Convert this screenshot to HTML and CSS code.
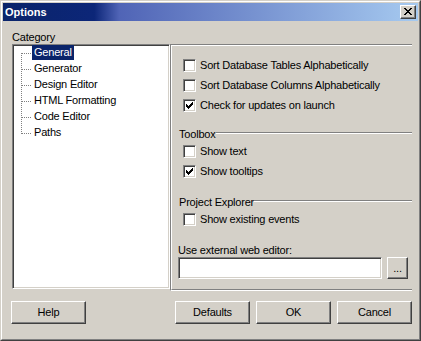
FILE: index.html
```html
<!DOCTYPE html>
<html>
<head>
<meta charset="utf-8">
<title>Options</title>
<link rel="stylesheet" href="styles.css">
</head>
<body>
<div class="window">
  <div class="frame">
    <div class="titlebar">
      <span class="title">Options</span>
      <div class="closebtn raised">
        <svg width="8" height="7" viewBox="0 0 8 7" shape-rendering="crispEdges"><path fill="#000" d="M0 0h2v1h-2zM6 0h2v1h-2zM1 1h2v1h-2zM5 1h2v1h-2zM2 2h4v1h-4zM3 3h2v1h-2zM2 4h4v1h-4zM1 5h2v1h-2zM5 5h2v1h-2zM0 6h2v1h-2zM6 6h2v1h-2z"/></svg>
      </div>
    </div>
    <div class="client">
      <div class="main">
        <div class="leftcol">
          <div class="label">Category</div>
          <div class="tree sunken">
            <ul class="items">
              <li class="item first"><span class="branch"></span><span class="text selected">General</span></li>
              <li class="item"><span class="branch"></span><span class="text">Generator</span></li>
              <li class="item"><span class="branch"></span><span class="text">Design Editor</span></li>
              <li class="item"><span class="branch"></span><span class="text">HTML Formatting</span></li>
              <li class="item"><span class="branch"></span><span class="text">Code Editor</span></li>
              <li class="item last"><span class="branch"></span><span class="text">Paths</span></li>
            </ul>
          </div>
        </div>
        <div class="panel">
          <div class="panel-inner">
            <div class="check"><span class="cb sunken"></span><span class="cb-text">Sort Database Tables Alphabetically</span></div>
            <div class="check"><span class="cb sunken"></span><span class="cb-text">Sort Database Columns Alphabetically</span></div>
            <div class="check"><span class="cb sunken"><svg width="7" height="7" viewBox="0 0 7 7" shape-rendering="crispEdges"><path fill="#000" d="M6 0h1v3h-1zM5 1h1v3h-1zM4 2h1v3h-1zM3 3h1v3h-1zM2 4h1v3h-1zM1 3h1v3h-1zM0 2h1v3h-1z"/></svg></span><span class="cb-text">Check for updates on launch</span></div>

            <div class="group-header gh-toolbox"><span class="gh-text">Toolbox</span><span class="gh-line"></span></div>
            <div class="check"><span class="cb sunken"></span><span class="cb-text">Show text</span></div>
            <div class="check"><span class="cb sunken"><svg width="7" height="7" viewBox="0 0 7 7" shape-rendering="crispEdges"><path fill="#000" d="M6 0h1v3h-1zM5 1h1v3h-1zM4 2h1v3h-1zM3 3h1v3h-1zM2 4h1v3h-1zM1 3h1v3h-1zM0 2h1v3h-1z"/></svg></span><span class="cb-text">Show tooltips</span></div>

            <div class="group-header gh-project"><span class="gh-text">Project Explorer</span><span class="gh-line"></span></div>
            <div class="check"><span class="cb sunken"></span><span class="cb-text">Show existing events</span></div>

            <div class="editor-label">Use external web editor:</div>
            <div class="editor-row">
              <div class="field sunken"></div>
              <div class="btn raised browse">...</div>
            </div>
          </div>
        </div>
      </div>
      <div class="footer">
        <div class="btn raised help">Help</div>
        <div class="btn raised defaults">Defaults</div>
        <div class="btn raised">OK</div>
        <div class="btn raised">Cancel</div>
      </div>
    </div>
  </div>
</div>
</body>
</html>
```
FILE: styles.css
```css
html, body {
  margin: 0;
  padding: 0;
}
body {
  width: 421px;
  height: 341px;
  overflow: hidden;
  background: #d4d0c8;
  font-family: "Liberation Sans", Arial, sans-serif;
  font-size: 11px;
  letter-spacing: -0.2px;
  color: #000;
}
.window {
  width: 421px;
  height: 341px;
  box-sizing: border-box;
  border: 1px solid;
  border-color: #d4d0c8 #404040 #404040 #d4d0c8;
  background: #d4d0c8;
}
.frame {
  height: 100%;
  box-sizing: border-box;
  border: 1px solid;
  border-color: #fff #808080 #808080 #fff;
  padding: 1px;
  display: flex;
  flex-direction: column;
}
.raised {
  box-sizing: border-box;
  background: #d4d0c8;
  border: 1px solid;
  border-color: #fff #404040 #404040 #fff;
  box-shadow: inset -1px -1px #808080, inset 1px 1px #d4d0c8;
}
.sunken {
  box-sizing: border-box;
  background: #fff;
  border: 1px solid;
  border-color: #808080 #fff #fff #808080;
  box-shadow: inset 1px 1px #404040, inset -1px -1px #d4d0c8;
}
.titlebar {
  flex: none;
  height: 18px;
  display: flex;
  align-items: center;
  padding: 0 2px;
  background: linear-gradient(to right, #0a246a 0, #0c2678 22%, #5064b6 28%, #a6caf0 100%);
}
.title {
  flex: 1;
  color: #fff;
  font-weight: bold;
  line-height: 18px;
  letter-spacing: 0;
}
.closebtn {
  width: 16px;
  height: 14px;
  padding: 2px 0 0 3px;
}
.closebtn svg {
  display: block;
}
.client {
  flex: 1;
  display: flex;
  flex-direction: column;
  padding: 10px 6px 0 9px;
}
.main {
  display: flex;
}
.leftcol {
  width: 158px;
  flex: none;
}
.label {
  line-height: 13px;
  height: 13px;
}
.tree {
  height: 245px;
}
.items {
  list-style: none;
  margin: 0;
  padding: 0;
}
.item {
  display: flex;
  align-items: flex-start;
  height: 16px;
}
.branch {
  flex: none;
  width: 19px;
  height: 16px;
  background-image:
    repeating-linear-gradient(to right, #808080 0 1px, transparent 1px 2px),
    repeating-linear-gradient(to bottom, #808080 0 1px, transparent 1px 2px);
  background-repeat: no-repeat;
  background-size: 10px 1px, 1px 16px;
  background-position: 9px 8px, 8px 0;
}
.item.first .branch {
  background-size: 10px 1px, 1px 8px;
  background-position: 9px 8px, 8px 8px;
}
.item.last .branch {
  background-size: 10px 1px, 1px 9px;
  background-position: 9px 8px, 8px 0;
}
.text {
  line-height: 15px;
  height: 15px;
  padding: 0 2px;
  white-space: nowrap;
}
.text.selected {
  background: #0a246a;
  color: #fff;
}
.panel {
  width: 242px;
  height: 247px;
  margin-top: 13px;
  box-sizing: border-box;
  border-top: 1px solid #808080;
  border-left: 1px solid #808080;
  border-bottom: 1px solid #fff;
}
.panel-inner {
  height: 100%;
  box-sizing: border-box;
  border-top: 1px solid #fff;
  border-left: 1px solid #fff;
  border-bottom: 1px solid #808080;
  padding: 9px 0 0 6px;
  display: flex;
  flex-direction: column;
}
.check {
  display: flex;
  align-items: center;
  height: 20px;
  padding-left: 5px;
  white-space: nowrap;
}
.cb {
  flex: none;
  width: 13px;
  height: 13px;
  padding: 2px;
  margin-right: 4px;
}
.cb svg {
  display: block;
}
.cb-text {
  line-height: 13px;
}
.group-header {
  display: flex;
  align-items: center;
  height: 14px;
}
.gh-toolbox {
  margin-top: 12px;
}
.gh-project {
  margin-top: 14px;
}
.gh-text {
  padding-left: 1px;
  line-height: 14px;
  white-space: nowrap;
}
.gh-line {
  flex: 1;
  height: 0;
  margin-top: -2px;
  border-top: 1px solid #808080;
  border-bottom: 1px solid #fff;
}
.editor-label {
  margin-top: 15px;
  line-height: 13px;
  height: 13px;
}
.editor-row {
  display: flex;
}
.field {
  width: 204px;
  height: 22px;
}
.btn {
  display: flex;
  align-items: center;
  justify-content: center;
  line-height: 13px;
}
.browse {
  width: 21px;
  height: 22px;
  margin-left: 5px;
}
.footer {
  display: flex;
  margin-top: 10px;
  gap: 6px;
}
.footer .btn {
  width: 75px;
  height: 23px;
}
.help {
  margin-left: -1px;
}
.defaults {
  margin-left: auto;
}
```
